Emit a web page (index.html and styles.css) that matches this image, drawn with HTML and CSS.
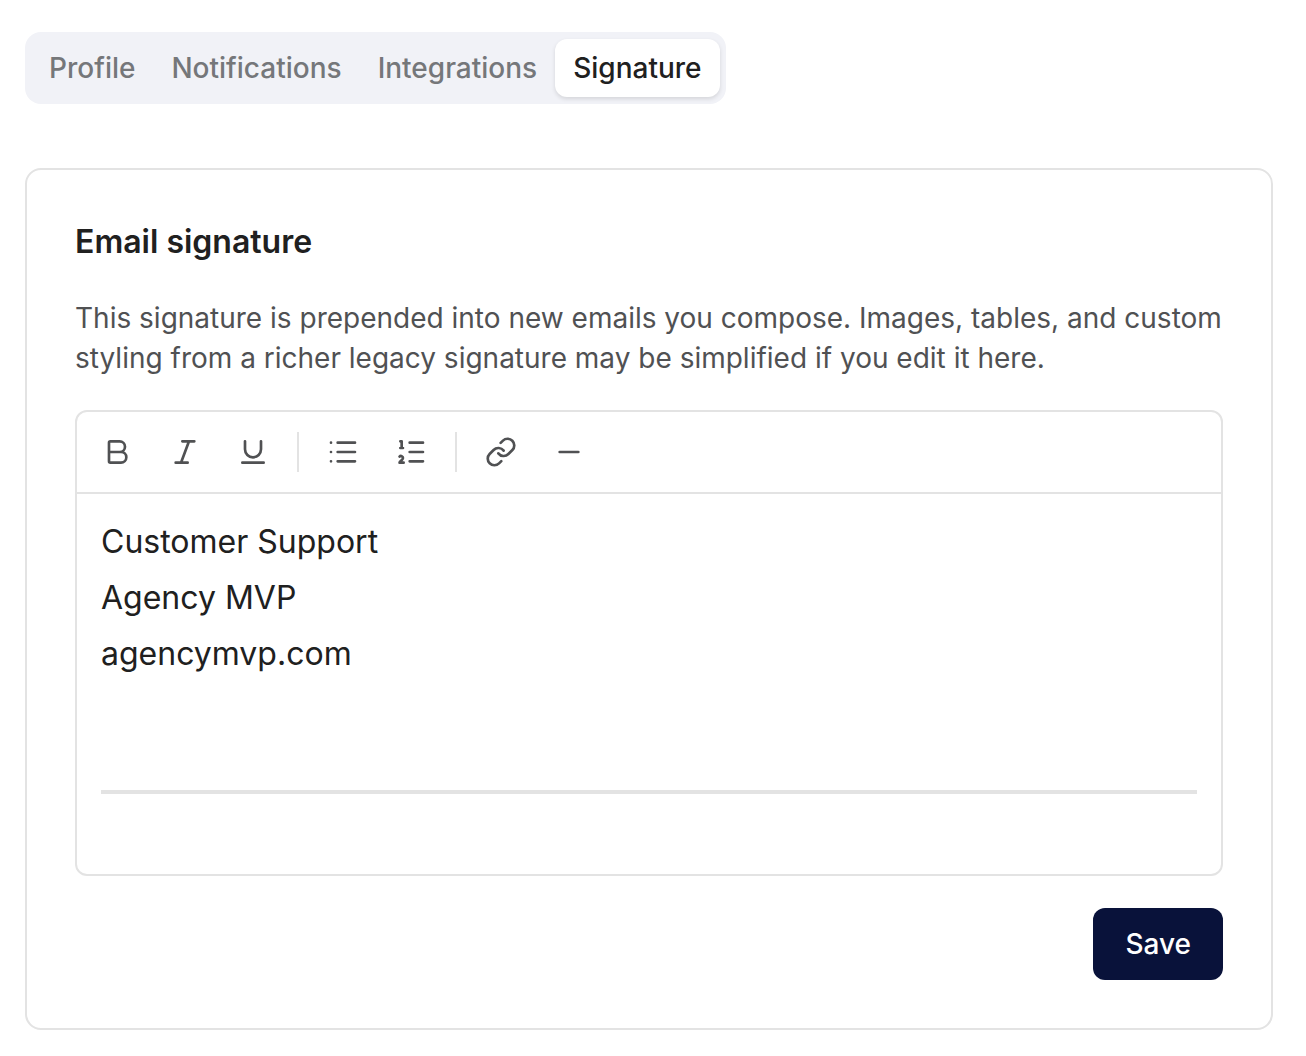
FILE: index.html
```html
<!DOCTYPE html>
<html lang="en">

	<head>
		<meta charset="UTF-8">
		<meta name="viewport" content="width=device-width, initial-scale=1">
		<title>Email signature</title>
		<link rel="stylesheet" href="styles.css">
	</head>

	<body>
		<div class="tabs" role="tablist">
			<button type="button" class="tab" role="tab" aria-selected="false">Profile</button>
			<button type="button" class="tab" role="tab" aria-selected="false">Notifications</button>
			<button type="button" class="tab" role="tab" aria-selected="false">Integrations</button>
			<button type="button" class="tab active" role="tab" aria-selected="true">Signature</button>
		</div>

		<form class="card">
			<h2 id="signature-title">Email signature</h2>
			<p class="hint">This signature is prepended into new emails you compose. Images, tables, and custom styling from a richer legacy signature may be simplified if you edit it here.</p>

			<div class="editor">
				<div class="toolbar" role="toolbar" aria-label="Formatting">
					<button type="button" aria-label="Bold">
						<svg viewBox="0 0 24 24"><path d="M6 12h9a4 4 0 0 1 0 8H7a1 1 0 0 1-1-1V5a1 1 0 0 1 1-1h7a4 4 0 0 1 0 8"/></svg>
					</button>
					<button type="button" aria-label="Italic">
						<svg viewBox="0 0 24 24"><path d="M19 4h-9M14 20H5M15 4 9 20"/></svg>
					</button>
					<button type="button" aria-label="Underline">
						<svg viewBox="0 0 24 24"><path d="M6 4v6a6 6 0 0 0 12 0V4M4 20h16"/></svg>
					</button>
					<span class="divider"></span>
					<button type="button" aria-label="Bullet list">
						<svg viewBox="0 0 24 24"><path d="M3 5h.01M3 12h.01M3 19h.01M8 5h13M8 12h13M8 19h13"/></svg>
					</button>
					<button type="button" aria-label="Numbered list">
						<svg viewBox="0 0 24 24"><path d="M11 5h10M11 12h10M11 19h10M4 4h1v5M4 9h2M6.5 20H3.4c0-1 2.6-1.925 2.6-3.5a1.5 1.5 0 0 0-2.6-1.02"/></svg>
					</button>
					<span class="divider"></span>
					<button type="button" aria-label="Link">
						<svg viewBox="0 0 24 24"><path d="M10 13a5 5 0 0 0 7.54.54l3-3a5 5 0 0 0-7.07-7.07l-1.72 1.71"/><path d="M14 11a5 5 0 0 0-7.54-.54l-3 3a5 5 0 0 0 7.07 7.07l1.71-1.71"/></svg>
					</button>
					<button type="button" aria-label="Horizontal rule">
						<svg viewBox="0 0 24 24"><path d="M5 12h14"/></svg>
					</button>
				</div>
				<div class="content" contenteditable="true" spellcheck="false" role="textbox" aria-multiline="true" aria-labelledby="signature-title">
					<p>Customer Support</p>
					<p>Agency MVP</p>
					<p>agencymvp.com</p>
					<p><br></p>
					<hr>
				</div>
			</div>

			<div class="actions">
				<button type="submit" class="save">Save</button>
			</div>
		</form>
	</body>

</html>
```
FILE: styles.css
```css
* {
	box-sizing: border-box;
}

body {
	margin: 0;
	padding: 32px 33px 26px 25px;
	background: #fff;
	color: #202020;
	font-family: Inter, "Liberation Sans", sans-serif;
	font-size: 28px;
	line-height: 40px;
}

button {
	border: 0;
	background: none;
	color: inherit;
	font: inherit;
	cursor: pointer;
}

.tabs {
	display: flex;
	width: fit-content;
	height: 72px;
	padding: 7px 6px;
	border-radius: 16px;
	background: #f1f2f7;
}

.tab {
	padding: 0 18px;
	border-radius: 12px;
	color: #75777a;
	font-weight: 500;
}

.tab.active {
	background: #fff;
	color: #202020;
	box-shadow: 0 2px 4px rgba(0, 0, 0, 0.12);
}

.card {
	margin-top: 64px;
	padding: 48px;
	border: 2px solid #e3e3e3;
	border-radius: 16px;
}

h2 {
	margin: 0;
	font-size: 32px;
	font-weight: 600;
	line-height: 48px;
}

.hint {
	margin: 32px 0;
	color: #505153;
}

.editor {
	border: 2px solid #e3e3e3;
	border-radius: 12px;
}

.toolbar {
	display: flex;
	align-items: center;
	gap: 4px;
	padding: 8px;
	border-bottom: 2px solid #e3e3e3;
}

.toolbar button {
	display: flex;
	align-items: center;
	justify-content: center;
	width: 64px;
	height: 64px;
	padding: 0;
	border-radius: 8px;
	color: #505153;
}

.toolbar button:hover {
	background: #f1f2f7;
}

.toolbar svg {
	width: 32px;
	height: 32px;
	fill: none;
	stroke: currentColor;
	stroke-width: 2;
	stroke-linecap: round;
	stroke-linejoin: round;
}

.divider {
	width: 2px;
	height: 40px;
	margin: 0 8px;
	background: #e3e3e3;
}

.content {
	padding: 20px 24px 80px;
	font-size: 32px;
	line-height: 56px;
	outline: none;
}

.content p {
	margin: 0;
}

.content hr {
	height: 4px;
	margin: 52px 0 0;
	border: 0;
	background: #e3e3e3;
}

.actions {
	display: flex;
	justify-content: flex-end;
	margin-top: 32px;
}

.save {
	height: 72px;
	padding: 0 32px;
	border-radius: 12px;
	background: #09123a;
	color: #fff;
	font-weight: 500;
}
```
